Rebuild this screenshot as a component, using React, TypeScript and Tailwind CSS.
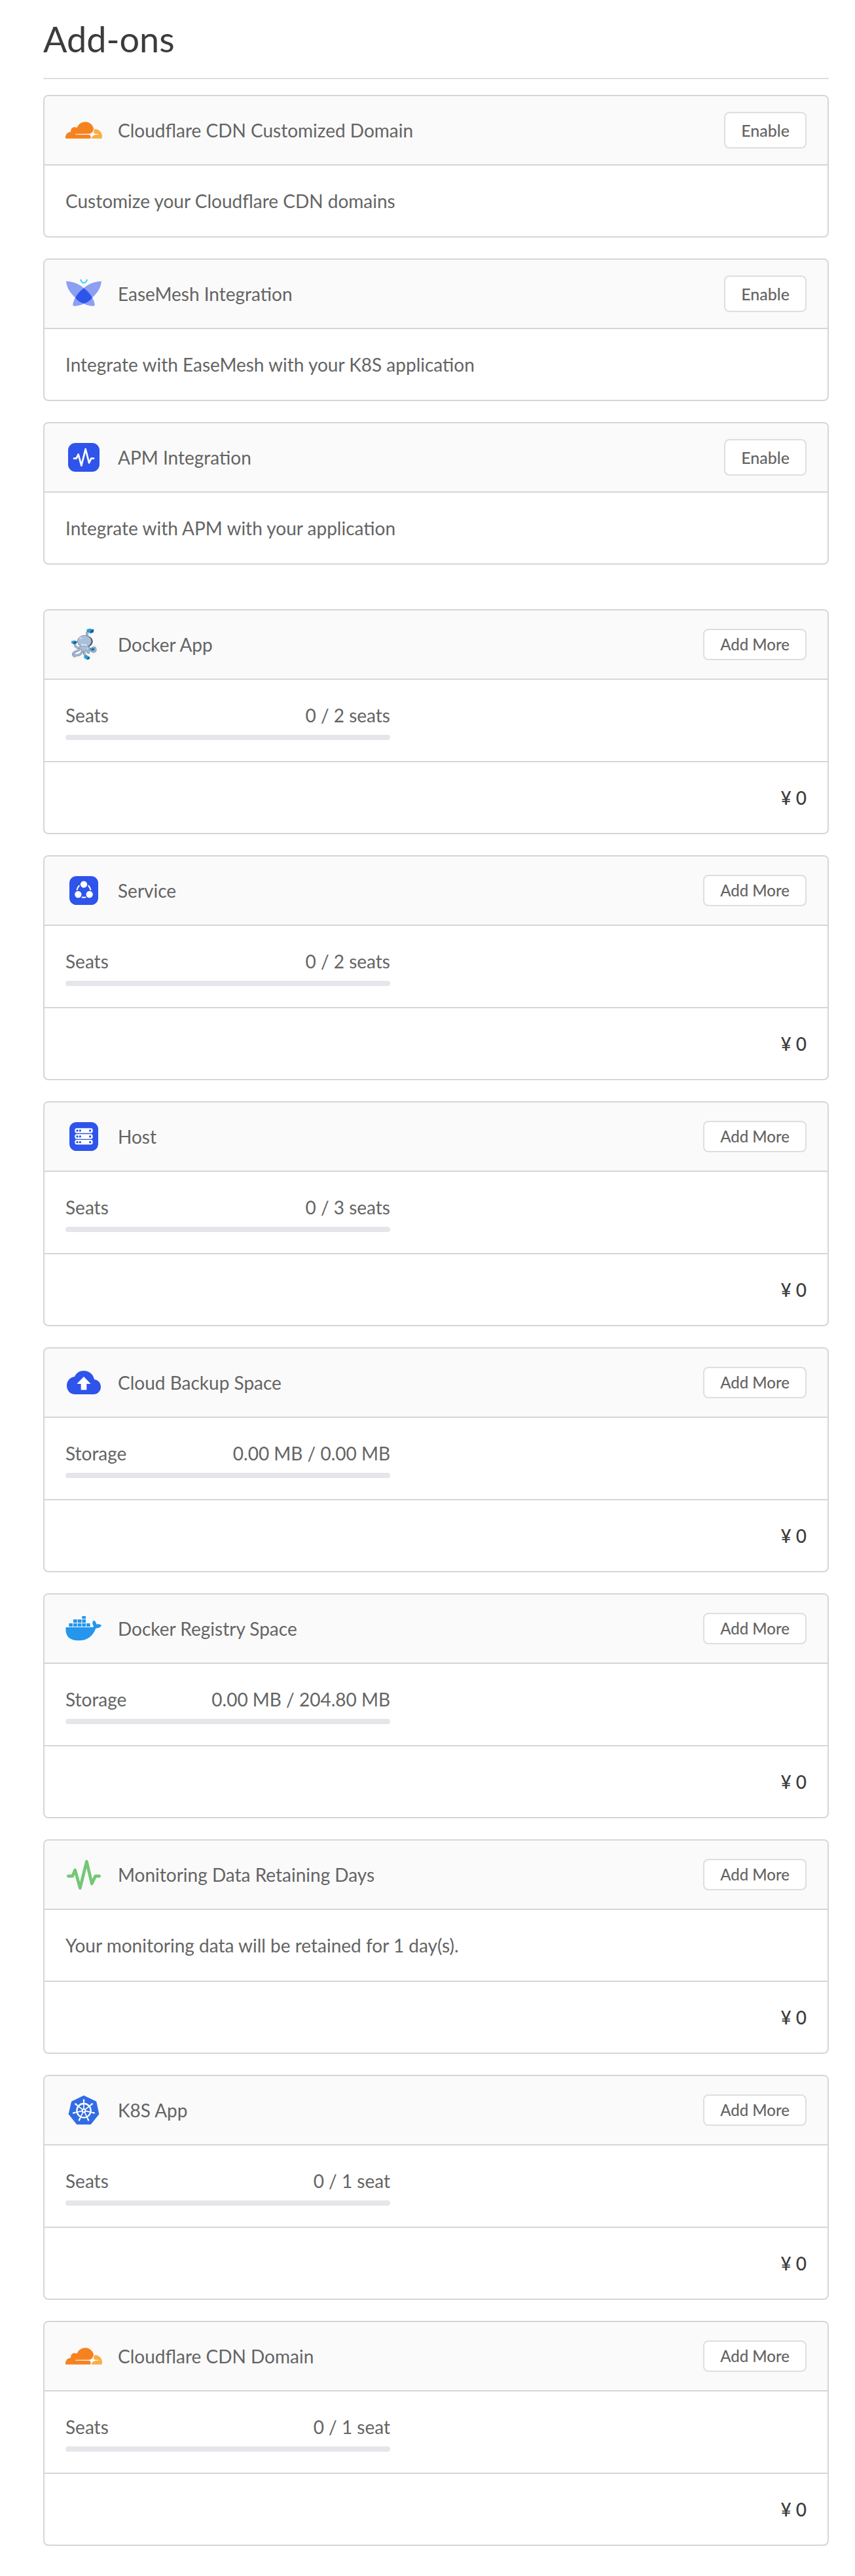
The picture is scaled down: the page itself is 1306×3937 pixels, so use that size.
import type { ReactNode } from "react";

function CloudflareIcon() {
  return (
    <svg viewBox="0 0 24 24" className="size-14" aria-hidden="true">
      <path
        fill="#F6821F"
        d="M16.5088 16.8447c.1475-.5068.0908-.9707-.1553-1.3154-.2246-.3164-.6045-.499-1.0615-.5205l-8.6592-.1123a.1559.1559 0 0 1-.1333-.0713c-.0283-.042-.0351-.0986-.021-.1553.0278-.084.1123-.1484.2036-.1562l8.7359-.1123c1.0351-.0489 2.1601-.8868 2.5537-1.9136l.499-1.3013c.0215-.0561.0293-.1128.0147-.168-.5625-2.5463-2.835-4.4453-5.5499-4.4453-2.5039 0-4.6284 1.6177-5.3876 3.8614-.4927-.3658-1.1187-.5625-1.794-.499-1.2026.119-2.1665 1.083-2.2861 2.2856-.0283.31-.0069.6128.0635.894C1.5683 13.171 0 14.7754 0 16.752c0 .1748.0142.3515.0352.5273.0141.083.0844.1475.1689.1475h15.9814c.0909 0 .1758-.0645.2032-.1553l.12-.4268z"
      />
      <path
        fill="#FBAD41"
        d="M19.2656 11.2813c-.0771 0-.1611 0-.2383.0112-.0566 0-.1054.0415-.127.0976l-.3378 1.1744c-.1475.5068-.0918.9707.1543 1.3164.2256.3164.6055.498 1.0625.5195l1.8437.1133c.0557 0 .1055.0263.1329.0703.0283.043.0351.1074.0214.1562-.0283.084-.1132.1485-.204.1553l-1.921.1123c-1.041.0488-2.1582.8867-2.5527 1.914l-.1406.3585c-.0283.0713.0215.1416.0986.1416h6.5977c.0771 0 .1474-.0489.169-.126.1122-.4082.1757-.837.1757-1.2803 0-2.6025-2.125-4.727-4.7344-4.727"
      />
    </svg>
  );
}

function EaseMeshIcon() {
  return (
    <svg viewBox="30 3 168 168" className="size-14" aria-hidden="true">
      <path fill="#8B9FF3" d="M33 30C66 29 98 45 117 64C138 83 152 103 156 110C162 122 164 132 164 142C145 145 128 140 114 132C98 126 82 112 75 104C54 87 36 60 33 30Z" />
      <path fill="#8B9FF3" d="M195 30C162 29 130 45 111 64C90 83 76 103 72 110C66 122 64 132 64 142C83 145 100 140 114 132C130 126 146 112 153 104C174 87 192 60 195 30Z" />
      <path fill="#2F54EB" d="M114 61C132 74 145 90 153 106C142 119 129 128 114 132C99 128 86 119 75 106C83 90 96 74 114 61Z" />
      <path fill="none" stroke="#36CFFB" strokeWidth="6" d="M99 21C101 30 108 37 114 37C120 37 127 30 129 21" />
    </svg>
  );
}

function ApmIcon() {
  return (
    <svg viewBox="30 3 168 168" className="size-14" aria-hidden="true">
      <rect x="42" y="21" width="144" height="132" rx="34" fill="#2F54EB" />
      <path
        fill="none"
        stroke="#fff"
        strokeWidth="8"
        strokeLinecap="round"
        strokeLinejoin="round"
        d="M69 92H80L89 73L103 125L122 49L138 112L148 92H159"
      />
    </svg>
  );
}

function DockerAppIcon() {
  const body = (
    <>
      <path d="M126 72C134 62 126 58 130 48" />
      <path d="M104 108C96 128 70 124 74 96" />
      <path d="M108 114C98 140 66 132 65 148C64 158 72 162 76 156" />
      <path d="M112 116C108 140 100 160 74 153" />
      <path d="M117 116C114 138 114 152 124 158" />
      <path d="M122 114C122 142 146 150 134 134" />
      <path d="M128 110C140 118 144 140 160 138C172 134 168 116 158 120" />
    </>
  );
  return (
    <svg viewBox="30 21 168 168" className="size-14" fill="none" strokeLinecap="round" aria-hidden="true">
      {/* white sticker outline */}
      <g stroke="#E9E9EB" strokeWidth="25">
        {body}
        <path d="M136 44H150M66 96H76M124 164H136" />
      </g>
      <g stroke="#fff" strokeWidth="21">
        {body}
        <path d="M136 44H150M66 96H76M124 164H136" />
      </g>
      <circle cx="116" cy="92" r="36" fill="#fff" />
      <g stroke="#5F7187" strokeWidth="10">{body}</g>
      <g stroke="#A3B8D2" strokeWidth="7">{body}</g>
      <ellipse cx="120" cy="91" rx="35" ry="28" fill="#46525F" />
      <ellipse cx="117" cy="90" rx="32" ry="27" fill="#A9BFDB" stroke="#74869C" strokeWidth="2" />
      <path fill="#A9BFDB" d="M98 104H134L134 122L116 134L101 122Z" />
      <ellipse cx="100" cy="76" rx="8" ry="5" fill="#C5D5EA" />
      <circle cx="108" cy="108" r="5" fill="#fff" />
      <circle cx="120" cy="109" r="5" fill="#fff" />
      <path stroke="#46525F" strokeWidth="2" d="M104 111H112M116 112H124" />
      <path fill="#2F9AD3" d="M127 36L141 32L160 36L158 49L145 54L129 48Z" />
      <path fill="#125F8E" d="M145 41L160 36L158 49L145 54Z" />
      <path fill="#2F9AD3" d="M57 90L71 86L83 90L81 99L67 104L58 99Z" />
      <path fill="#125F8E" d="M68 94L83 90L81 99L67 104Z" />
      <path fill="#2F9AD3" d="M141 122L153 118L163 123L161 130L151 134L142 129Z" />
      <path fill="#125F8E" d="M152 126L163 123L161 130L151 134Z" />
      <path fill="#2F9AD3" d="M115 158L125 153L142 162L140 171L130 175L116 168Z" />
      <path fill="#125F8E" d="M129 167L142 162L140 171L130 175Z" />
    </svg>
  );
}

function ServiceIcon() {
  return (
    <svg viewBox="30 9 168 168" className="size-14" aria-hidden="true">
      <rect x="48" y="27" width="132" height="132" rx="32" fill="#2F54EB" />
      <circle cx="114" cy="94" r="31" fill="none" stroke="#fff" strokeWidth="6" />
      <g fill="#fff" stroke="#2F54EB" strokeWidth="5">
        <circle cx="114" cy="65" r="18" />
        <circle cx="88" cy="111" r="18" />
        <circle cx="140" cy="111" r="18" />
      </g>
    </svg>
  );
}

function HostIcon() {
  return (
    <svg viewBox="30 12 168 168" className="size-14" aria-hidden="true">
      <rect x="48" y="30" width="132" height="132" rx="32" fill="#2F54EB" />
      {[69, 96, 122].map((y) => (
        <g key={y}>
          <rect x="73" y={y - 11} width="82" height="22" rx="9" fill="#fff" />
          <g fill="#2F54EB">
            <circle cx="84" cy={y} r="5" />
            <circle cx="97" cy={y} r="5" />
            <circle cx="143" cy={y} r="5" />
          </g>
        </g>
      ))}
    </svg>
  );
}

function BackupIcon() {
  return (
    <svg viewBox="30 15 168 168" className="size-14" aria-hidden="true">
      <path fill="#2F54EB" d="M75 153C52 153 36 136 36 113C36 91 51 75 72 72C79 55 95 45 114 45C139 45 158 62 162 85C180 87 192 101 192 119C192 138 177 153 158 153Z" />
      <path fill="#fff" d="M114 72L146 105H127V133H101V105H82Z" />
    </svg>
  );
}

function RegistryIcon() {
  const boxes = [
    [106, 45],
    [66, 60], [86, 60], [106, 60],
    [46, 78], [66, 78], [86, 78], [106, 78], [126, 78],
  ];
  return (
    <svg viewBox="30 18 168 168" className="size-14" fill="#2496ED" aria-hidden="true">
      {boxes.map(([x, y]) => (
        <rect key={`${x}-${y}`} x={x} y={y} width="17" height={y === 45 ? 12 : 15} />
      ))}
      <path d="M31 100C31 97 33 96 36 96H148C154 96 158 94 160 92C152 82 152 72 160 64C168 70 172 76 172 83C180 80 188 82 195 87C191 96 182 101 169 101C156 136 130 157 90 157C48 157 30 138 31 100Z" />
    </svg>
  );
}

function MonitoringIcon() {
  return (
    <svg viewBox="30 6 168 168" className="size-14" aria-hidden="true">
      <path
        fill="none"
        stroke="#73C774"
        strokeWidth="14"
        strokeLinecap="round"
        strokeLinejoin="round"
        d="M43 97H62L74 69L97 152L127 30L151 132L167 97H185"
      />
    </svg>
  );
}

function KubernetesIcon() {
  const spokes = [0, 1, 2, 3, 4, 5, 6].map((n) => (n * 360) / 7);
  return (
    <svg viewBox="30 21 168 168" className="size-14" aria-hidden="true">
      <path
        fill="#326CE5"
        stroke="#326CE5"
        strokeWidth="6"
        strokeLinejoin="round"
        d="M114 41L169 67L181 123L145 168H83L47 123L60 67Z"
      />
      <g fill="none" stroke="#fff" strokeLinecap="round">
        <circle cx="114" cy="107" r="32" strokeWidth="7" />
        {spokes.map((angle) => (
          <g key={angle} transform={`rotate(${angle} 114 107)`}>
            <path strokeWidth="5" d="M114 98V62" />
            <path strokeWidth="7" d="M114 64V58" />
          </g>
        ))}
      </g>
      <circle cx="114" cy="107" r="10" fill="#fff" />
      <circle cx="114" cy="107" r="4" fill="#326CE5" />
    </svg>
  );
}

type Addon = {
  title: string;
  icon: ReactNode;
  text?: string;
  label?: string;
  usage?: string;
};

const integrations: Addon[] = [
  { title: "Cloudflare CDN Customized Domain", icon: <CloudflareIcon />, text: "Customize your Cloudflare CDN domains" },
  { title: "EaseMesh Integration", icon: <EaseMeshIcon />, text: "Integrate with EaseMesh with your K8S application" },
  { title: "APM Integration", icon: <ApmIcon />, text: "Integrate with APM with your application" },
];

const quotas: Addon[] = [
  { title: "Docker App", icon: <DockerAppIcon />, label: "Seats", usage: "0 / 2 seats" },
  { title: "Service", icon: <ServiceIcon />, label: "Seats", usage: "0 / 2 seats" },
  { title: "Host", icon: <HostIcon />, label: "Seats", usage: "0 / 3 seats" },
  { title: "Cloud Backup Space", icon: <BackupIcon />, label: "Storage", usage: "0.00 MB / 0.00 MB" },
  { title: "Docker Registry Space", icon: <RegistryIcon />, label: "Storage", usage: "0.00 MB / 204.80 MB" },
  { title: "Monitoring Data Retaining Days", icon: <MonitoringIcon />, text: "Your monitoring data will be retained for 1 day(s)." },
  { title: "K8S App", icon: <KubernetesIcon />, label: "Seats", usage: "0 / 1 seat" },
  { title: "Cloudflare CDN Domain", icon: <CloudflareIcon />, label: "Seats", usage: "0 / 1 seat" },
];

function AddonCard({ addon, paid = false }: { addon: Addon; paid?: boolean }) {
  return (
    <section className="overflow-hidden rounded-lg border-2 border-[#d5d5db] divide-y-2 divide-[#d5d5db]">
      <div className="flex h-[106px] items-center bg-[#fafafa] px-8">
        {addon.icon}
        <h2 className="ml-6 flex-1">{addon.title}</h2>
        {paid ? (
          <button type="button" className="h-12 rounded-lg border-2 border-[#dedede] bg-white px-6 text-2xl leading-8 font-medium">
            Add More
          </button>
        ) : (
          <button type="button" className="h-14 rounded-lg border-2 border-[#dedede] bg-white px-6 text-[25px] leading-8 font-medium">
            Enable
          </button>
        )}
      </div>

      <div className="p-8">
        {addon.text ? (
          <p>{addon.text}</p>
        ) : (
          <div className="w-full max-w-[496px]">
            <div className="flex justify-between">
              <span>{addon.label}</span>
              <span>{addon.usage}</span>
            </div>
            <div className="mt-2 h-2 rounded-full bg-[#e5e6ea]" />
          </div>
        )}
      </div>

      {paid && <div className="p-8 text-right font-medium text-[#3c3c3c]">¥ 0</div>}
    </section>
  );
}

export default function App() {
  return (
    <main className="bg-white pt-7 pr-10 pb-11 pl-[66px] font-['Lato',sans-serif] text-[28px] leading-11 text-[#646464]">
      <h1 className="border-b-2 border-[#dedee0] pb-7 text-[54px] leading-[63px] text-[#3c3c3c]">Add-ons</h1>

      <div className="mt-6 flex flex-col gap-8">
        {integrations.map((addon) => (
          <AddonCard key={addon.title} addon={addon} />
        ))}
      </div>

      <div className="mt-17 flex flex-col gap-8">
        {quotas.map((addon) => (
          <AddonCard key={addon.title} addon={addon} paid />
        ))}
      </div>
    </main>
  );
}
